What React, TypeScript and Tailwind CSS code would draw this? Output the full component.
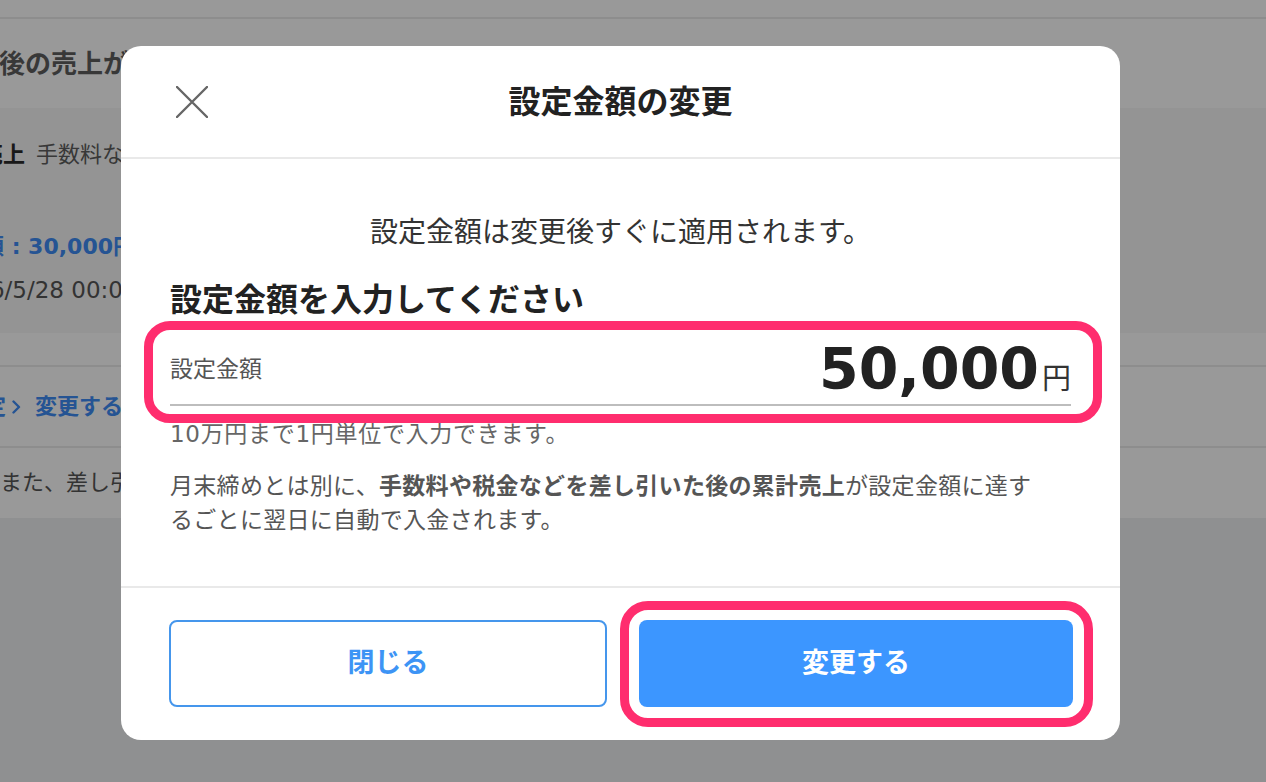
import React from "react"

const CloseIcon = () => (
  <svg className="h-[32px] w-[32px]" viewBox="0 0 32 32" fill="none" stroke="currentColor">
    <path d="M1 1L31 31M31 1L1 31" strokeWidth={2.4} strokeLinecap="round" />
  </svg>
)

const Chevron = () => (
  <svg className="h-[14px] w-[9px]" viewBox="0 0 9 14" fill="none" stroke="currentColor">
    <path d="M1.5 1.5L7 7L1.5 12.5" strokeWidth={2.4} strokeLinecap="round" strokeLinejoin="round" />
  </svg>
)

// page underneath the dialog (mostly hidden by it)
const BackPage = () => (
  <div className="flex flex-col">
    <div className="h-[19px] border-b-2 border-[#ececec] bg-white" />
    <div className="flex h-[89px] items-center bg-white">
      <p className="-ml-[1px] whitespace-nowrap text-[26px] font-bold leading-none text-[#5e5e5e]">
        後の売上が設定金額に達すると自動で入金されます
      </p>
    </div>
    <div className="flex h-[225px] flex-col bg-[#f7f7f7]">
      <div className="flex h-[94px] items-center">
        <p className="-ml-[19px] whitespace-nowrap text-[22px] leading-none">
          <span className="font-bold text-[#2a2a2a]">売上</span>
          <span className="ml-[11px] text-[#5e5e5e]">手数料などを差し引いた後の金額</span>
        </p>
      </div>
      <p className="mt-[28px] -ml-[84px] whitespace-nowrap text-[22px] font-bold leading-[34px] text-[#3f8cf5]">
        設定金額 : 30,000円
      </p>
      <p className="mt-[11px] -ml-[54px] whitespace-nowrap text-[23px] leading-[30px] text-[#555]">
        2026/5/28 00:00 更新
      </p>
    </div>
    <div className="h-[34px] border-b-2 border-[#ececec] bg-white" />
    <div className="flex h-[81px] items-center gap-[6px] border-b-2 border-[#ececec] bg-white text-[#3f8cf5]">
      <span className="-ml-[38px] whitespace-nowrap text-[22px] font-bold leading-none">設定</span>
      <Chevron />
      <span className="ml-[8px] whitespace-nowrap text-[22px] font-bold leading-none">変更する</span>
    </div>
    <div className="flex h-[70px] items-center bg-white">
      <p className="whitespace-nowrap text-[22px] leading-none text-[#555]">
        また、差し引かれる手数料については
      </p>
    </div>
  </div>
)

export default function App() {
  return (
    <div className="relative h-[782px] w-full overflow-hidden bg-[#eef0f2] font-['DejaVu_Sans','Noto_Sans_CJK_JP',sans-serif]">
      <BackPage />

      {/* dim overlay */}
      <div className="absolute inset-0 bg-black/40" />

      {/* dialog */}
      <div className="absolute left-[121px] top-[46px] flex h-[694px] w-[999px] flex-col rounded-[20px] bg-white">
        <div className="grid h-[113px] grid-cols-[1fr_auto_1fr] items-center border-b-2 border-[#e9e9e9] px-[55px]">
          <button className="justify-self-start text-[#666]">
            <CloseIcon />
          </button>
          <h2 className="text-[32px] font-bold leading-none text-[#222]">設定金額の変更</h2>
          <div />
        </div>

        <div className="flex-1 px-[49px] pt-[55px]">
          <p className="text-center text-[28px] leading-[38px] text-[#333]">
            設定金額は変更後すぐに適用されます。
          </p>
          <h3 className="mt-[27px] text-[32px] font-bold leading-[42px] text-[#222]">
            設定金額を入力してください
          </h3>
          <div className="mt-[13px] flex h-[72px] items-center justify-between border-b-2 border-[#bdbdbd]">
            <span className="text-[23px] text-[#555]">設定金額</span>
            <span className="flex items-baseline">
              <span className="text-[57px] font-bold leading-none text-[#222]">50,000</span>
              <span className="ml-[3px] text-[29px] leading-none text-[#333]">円</span>
            </span>
          </div>
          <p className="mt-[12px] text-[23px] leading-[32px] tracking-[0.7px] text-[#666]">
            10万円まで1円単位で入力できます。
          </p>
          <p className="mt-[19px] text-[23px] leading-[34px] tracking-[0.3px] text-[#555]">
            月末締めとは別に、<span className="font-bold">手数料や税金などを差し引いた後の累計売上</span>が設定金額に達す
            <br />
            るごとに翌日に自動で入金されます。
          </p>
        </div>

        <div className="grid grid-cols-[438px_434px] gap-[32px] border-t-2 border-[#e9e9e9] pb-[33px] pl-[48px] pt-[32px]">
          <button className="h-[87px] rounded-[8px] border-2 border-[#4596ec] text-[27px] font-bold text-[#3d94f5]">
            閉じる
          </button>
          <button className="h-[87px] rounded-[8px] bg-[#3c96ff] text-[27px] font-bold text-white">
            変更する
          </button>
        </div>

        {/* highlight annotations */}
        <div className="absolute left-[23px] top-[275px] h-[102px] w-[958px] rounded-[26px] border-[9px] border-[#ff2d6e]" />
        <div className="absolute left-[499px] top-[555px] h-[126px] w-[473px] rounded-[28px] border-[9px] border-[#ff2d6e]" />
      </div>
    </div>
  )
}
